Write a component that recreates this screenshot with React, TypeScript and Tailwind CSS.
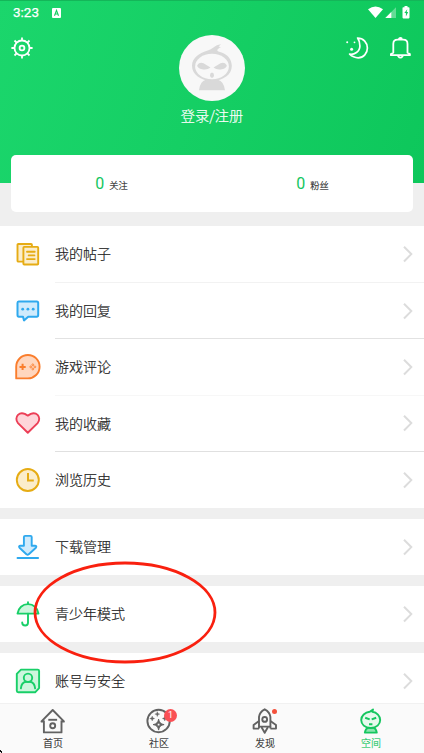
import type { ReactNode } from "react";

const PostsIcon = () => (
  <svg width="28" height="28" viewBox="0 0 28 28" fill="#fbedcb" stroke="#e6ac14" strokeWidth="1.9" strokeLinejoin="round">
    <rect x="3.5" y="4" width="14.4" height="17.6" rx="0.8" />
    <rect x="9.4" y="6.9" width="14.8" height="17.6" rx="0.8" />
    <path d="M13 11.7h7.7M14.7 15.4h5.7M13 19.1h7.7" strokeLinecap="round" />
  </svg>
);

const RepliesIcon = () => (
  <svg width="28" height="28" viewBox="0 0 28 28">
    <path
      d="M4.6 4.5h18.2q1.4 0 1.4 1.6v12q0 1.6-1.6 1.6H14.2L10 23.4 9 19.7H4.9Q3.5 19.7 3.5 18.1V6.1Q3.5 4.5 4.6 4.5Z"
      fill="#d0ebfc" stroke="#2fa9ee" strokeWidth="2" strokeLinejoin="round"
    />
    <g fill="#2fa9ee">
      <circle cx="8.7" cy="12.2" r="1.4" />
      <circle cx="13.9" cy="12.2" r="1.4" />
      <circle cx="19.2" cy="12.2" r="1.4" />
    </g>
  </svg>
);

const GamesIcon = () => (
  <svg width="28" height="28" viewBox="0 0 28 28" fill="none" stroke="#fa7d2c">
    <path d="M2.2 25.4V13.8A11.7 11.7 0 1 1 13.8 25.4Z" fill="#ffd6be" strokeWidth="1.9" strokeLinejoin="round" />
    <path d="M8.6 10.8v6.2M5.5 13.9h6.2" strokeWidth="2" />
    <g strokeWidth="0.9">
      <circle cx="18.8" cy="11.8" r="0.9" />
      <circle cx="18.8" cy="16" r="0.9" />
      <circle cx="16.7" cy="13.9" r="0.9" />
      <circle cx="20.9" cy="13.9" r="0.9" />
    </g>
  </svg>
);

const HeartIcon = () => (
  <svg width="28" height="28" viewBox="0 0 28 28">
    <path
      d="M13.8 23.8 4 14.1C1.8 11.6 1.9 8 4 5.9 5.6 4.4 8.8 4.1 10.8 4.9L13.8 6.6 16.8 4.9C18.8 4.1 22 4.4 23.6 5.9 25.7 8 25.8 11.6 23.6 14.1Z"
      fill="#fed5da" stroke="#ec3f57" strokeWidth="1.9" strokeLinejoin="round"
    />
  </svg>
);

const ClockIcon = () => (
  <svg width="28" height="28" viewBox="0 0 28 28" fill="none" stroke="#e6ac14">
    <circle cx="13.8" cy="14" r="11" fill="#fbedcb" strokeWidth="1.9" />
    <path d="M14 7v7.4h5.8" strokeWidth="2" />
  </svg>
);

const DownloadIcon = () => (
  <svg width="28" height="28" viewBox="0 0 28 28" fill="#d0ebfc" stroke="#2fa9ee" strokeWidth="1.9" strokeLinejoin="round" strokeLinecap="round">
    <path d="M11.2 2.9h5.3q1.2 0 1.2 1.2v8.7h3.2q2.3.2 1 1.9L14.8 21.2q-1.2 1.2-2.4 0L5.5 14.7q-1.3-1.7 1-1.9h3.4V4.1q0-1.2 1.3-1.2Z" />
    <path d="M3.5 25h20.6" />
  </svg>
);

const UmbrellaIcon = () => (
  <svg width="28" height="28" viewBox="0 0 28 28" fill="none" stroke="#18cf68" strokeWidth="1.9" strokeLinejoin="round" strokeLinecap="round">
    <path d="M3.5 13.6C4.3 7.8 8.6 4.1 14 4.1S23.7 7.8 24.5 13.6Z" fill="#cdf6dd" />
    <path d="M14 2.2v1.9M14 13.8v9q0 2.7-2.8 2.7-3 0-3-3.1" />
  </svg>
);

const AccountIcon = () => (
  <svg width="28" height="28" viewBox="0 0 28 28" fill="none" stroke="#18cf68" strokeWidth="1.9" strokeLinejoin="round" strokeLinecap="round">
    <path d="M7 2.6h16.7q1.4 0 1.4 1.5v17l-4 4.2H4.3q-1.5 0-1.5-1.5V6.8Z" fill="#cdf6dd" />
    <circle cx="14" cy="10.8" r="4.2" />
    <path d="M6.9 21.4Q7.4 15.3 12 14.8M21.1 21.4Q20.6 15.3 16 14.8" />
  </svg>
);

const GearIcon = () => (
  <svg width="22" height="22" viewBox="0 0 22 22" fill="none" stroke="#fff" strokeWidth="1.8">
    <circle cx="11" cy="11" r="7.5" />
    <circle cx="11" cy="11" r="2.4" />
    <path d="M11 .4v3M11 18.6v3M.4 11h3M18.6 11h3M3.5 3.5l2.1 2.1M16.4 16.4l2.1 2.1M3.5 18.5l2.1-2.1M16.4 5.6l2.1-2.1" />
  </svg>
);

const MoonIcon = () => (
  <svg width="24" height="24" viewBox="0 0 24 24" fill="none" stroke="#fff" strokeWidth="1.7" strokeLinejoin="round">
    <path d="M11.6 2C17.5 2 21.4 6.8 21.4 12S17.5 21.8 12.2 21.8Q7.4 21.8 3.6 18.2C8.2 19 13.9 15.7 13.9 10Q13.9 5.2 11.6 2Z" />
    <g fill="#fff" stroke="none">
      <circle cx="1.2" cy="6.3" r="1" />
      <circle cx="8.5" cy="6.3" r="0.9" />
      <circle cx="5.6" cy="13.3" r="1.5" />
    </g>
  </svg>
);

const BellIcon = () => (
  <svg width="22" height="24" viewBox="0 0 22 24" fill="none" stroke="#fff" strokeWidth="1.8" strokeLinejoin="round" strokeLinecap="round">
    <path d="M3.3 16.8V7.9q0-4.2 4.4-4.2h5.4q4.4 0 4.4 4.2v8.9L19.9 18v1.2H.9V18ZM8.9 3.4q0-1.5 1.5-1.5t1.5 1.5M8.2 20.2q2.2 3 4.4 0" />
  </svg>
);

const Mascot = () => (
  <svg width="66" height="66" viewBox="0 0 66 66">
    <path d="M20 55.3Q20.7 46.5 27.2 44.5H38.7Q45 46.5 46 55.3Z" fill="#d9d9d9" />
    <path
      d="M33 45.8C21.5 45.8 13 39.5 13 30.8 13 23 20.2 18 28 15.7 34 14 35.5 10 42 9.2L39.6 11.4 42 12.2C39.8 12.8 38.3 14.5 38.3 15.2 38.3 16.3 39.8 16.4 43.3 17.7 49.2 20 52.8 24.8 52.8 31 52.8 39.5 44.5 45.8 33 45.8Z"
      fill="#d9d9d9"
    />
    <ellipse cx="33" cy="31.5" rx="16.9" ry="12.8" fill="#f8f8f8" />
    <path d="M18.2 30.2Q20.6 26.7 24.5 28.3L31.5 32.5Q28.5 35.1 23.2 34.3 18.4 33.4 18.2 30.2ZM47.8 30.2Q45.4 26.7 41.5 28.3L34.5 32.5Q37.5 35.1 42.8 34.3 47.6 33.4 47.8 30.2Z" fill="#d9d9d9" />
    <ellipse cx="33" cy="40.2" rx="2" ry="2.7" fill="#d9d9d9" />
  </svg>
);

const Chevron = () => (
  <svg width="10" height="18" viewBox="0 0 10 18" fill="none" stroke="#dcdcdc" strokeWidth="2">
    <path d="M1 1.7 8.3 9.1 1 16.5" />
  </svg>
);

const HomeIcon = () => (
  <svg width="28" height="28" viewBox="0 0 28 28" fill="none" stroke="#626262" strokeWidth="1.9" strokeLinejoin="round">
    <path d="M4.9 13.4v12h17.6v-12M2 14.9 13.7 3 25.4 14.9M1.8 14.5h3M22.6 14.5h3" />
    <path d="M9.3 12.8h8.8" />
    <circle cx="13.7" cy="18.8" r="2.5" />
  </svg>
);

const CommunityIcon = () => (
  <svg width="28" height="28" viewBox="0 0 28 28" fill="#626262">
    <circle cx="13.6" cy="14" r="11.2" fill="none" stroke="#626262" strokeWidth="1.9" />
    <path d="M13.6 12.1Q14.2 17 19.1 17.6 14.2 18.2 13.6 23.1 13 18.2 8.1 17.6 13 17 13.6 12.1Z" stroke="#626262" strokeWidth="1" />
    <path d="M12.7 16.7h1.8v1.8h-1.8z" fill="#fafafa" />
    <path d="M12.3 4.6l.7 1.8 1.8.7-1.8.7-.7 1.8-.7-1.8-1.8-.7 1.8-.7zM7.2 9l.7 1.8 1.8.7-1.8.7-.7 1.8-.7-1.8-1.8-.7 1.8-.7zM19.8 9l.7 1.8 1.8.7-1.8.7-.7 1.8-.7-1.8-1.8-.7 1.8-.7z" stroke="#626262" strokeWidth=".3" />
  </svg>
);

const DiscoverIcon = () => (
  <svg width="28" height="28" viewBox="0 0 28 28" fill="none" stroke="#626262" strokeWidth="1.9" strokeLinejoin="round">
    <path d="M8 19.6V9.8Q8.6 5 13.7 2.3 18.8 5 19.4 9.8V19.6Z" />
    <path d="M8 14 2.6 18V21.6H8M19.4 14 25 18v3.6h-5.6M8 19.6v2M19.4 19.6v2M10.4 20l3.3 5.8 3.3-5.8" />
    <circle cx="13.7" cy="12.4" r="2.4" />
  </svg>
);

const SpaceIcon = () => (
  <svg width="28" height="28" viewBox="0 0 28 28" fill="none" stroke="#15c65f" strokeWidth="1.9" strokeLinejoin="round">
    <path d="M7.8 25.6Q8.6 21.4 11 20.8h5.8Q19.1 21.4 19.8 25.6Z" fill="#8be5ae" />
    <path d="M13.7 21C7.9 21 4.2 17.3 4.2 13.1 4.2 8.7 8 5.4 12.8 4.8L16 2.4 15.3 4.8C19.8 5.5 23.2 8.8 23.2 13.1 23.2 17.3 19.5 21 13.7 21Z" fill="#e6faed" />
    <path d="M8.2 10.8l4.5 1.6M19.2 10.8l-4.5 1.6M12 17.2h3.4" strokeWidth="2" />
  </svg>
);

type Item = { label: string; icon: ReactNode };

const groups: Item[][] = [
  [
    { label: "我的帖子", icon: <PostsIcon /> },
    { label: "我的回复", icon: <RepliesIcon /> },
    { label: "游戏评论", icon: <GamesIcon /> },
    { label: "我的收藏", icon: <HeartIcon /> },
    { label: "浏览历史", icon: <ClockIcon /> },
  ],
  [{ label: "下载管理", icon: <DownloadIcon /> }],
  [{ label: "青少年模式", icon: <UmbrellaIcon /> }],
  [{ label: "账号与安全", icon: <AccountIcon /> }],
];

const dividers = ["", "bg-[#f2f2f2]", "bg-[#e2e2e2]", "bg-[#f7f7f7]", "bg-[#e0e0e0]"];

const tabs = [
  { label: "首页", icon: <HomeIcon /> },
  { label: "社区", icon: <CommunityIcon />, count: 1 },
  { label: "发现", icon: <DiscoverIcon />, dot: true },
  { label: "空间", icon: <SpaceIcon />, active: true },
];

const StatusBar = () => (
  <div className="flex h-6 items-center border-t border-[#14b659] px-[13px] text-white">
    <span className="w-[27px] font-[Roboto] text-[13.5px] leading-none [-webkit-text-stroke:0.25px]">3:23</span>
    <svg className="ml-3" width="9" height="10" viewBox="0 0 9 10">
      <rect width="9" height="10" rx="1" fill="#fff" />
      <path d="M2.5 7.8 4.5 2.3 6.5 7.8M3.2 6h2.6" stroke="#16cd63" strokeWidth="1.1" fill="none" />
    </svg>
    <svg className="ml-auto" width="43" height="13" viewBox="0 0 43 13" fill="#fff">
      <path d="M0 3.2Q7.5-2.3 15 3.2L7.5 12Z" />
      <path d="M28 1.3V12H17.3Z" fillOpacity=".35" />
      <path d="M23.3 6V12H17.3Z" />
      <path d="M36.5 0h3v1.2h1.2q.8 0 .8.8v9.6q0 .8-.8.8h-5.4q-.8 0-.8-.8V2q0-.8.8-.8h1.2Z" />
      <path d="M39.3 3.2 36.3 7h1.6v3.4L40.2 6h-1.5Z" fill="#12cb60" />
    </svg>
  </div>
);

const Stat = ({ value, label }: { value: number; label: string }) => (
  <div className="flex items-baseline">
    <span className="font-[Roboto] text-[16px] leading-none text-[#13c660]">{value}</span>
    <span className="ml-[5px] text-[9.3px] leading-none font-light text-[#222] [-webkit-text-stroke:0.2px]">{label}</span>
  </div>
);

const Row = ({ label, icon }: Item) => (
  <button className="flex h-[56.4px] w-full items-center pl-3.5">
    {icon}
    <span className="ml-[13px] flex-1 pb-[0.5px] text-left text-[14px] font-light text-[#222] [-webkit-text-stroke:0.2px]">
      {label}
    </span>
    <span className="mr-[11px]">
      <Chevron />
    </span>
  </button>
);

export default function App() {
  return (
    <div className="relative flex h-[753px] w-[424px] flex-col overflow-hidden bg-[#efefef] font-['Noto_Sans_CJK_SC',sans-serif]">
      {/* Header */}
      <header className="h-[182.5px] shrink-0 bg-linear-110 from-[#1bd66c] to-[#0dc75b]">
        <StatusBar />
        <div className="flex items-start justify-between pr-3 pl-[11px]">
          <button className="mt-[13px] w-[67px]">
            <GearIcon />
          </button>
          <div className="mt-[11px] flex flex-col items-center">
            <div className="rounded-full bg-[#f8f8f8]">
              <Mascot />
            </div>
            <span className="mt-[3px] text-[14.2px] leading-[22px] font-light text-white [-webkit-text-stroke:0.2px]">登录/注册</span>
          </div>
          <div className="mt-3 flex w-[66px] justify-between">
            <MoonIcon />
            <BellIcon />
          </div>
        </div>
      </header>

      {/* Follow counts */}
      <section className="relative mx-[11px] -mt-[27.5px] mb-3.5 grid h-[57px] shrink-0 grid-cols-2 place-items-center rounded-[5px] bg-white">
        <Stat value={0} label="关注" />
        <Stat value={0} label="粉丝" />
      </section>

      {/* Menu */}
      <main className="flex min-h-0 flex-1 flex-col gap-[10.6px] overflow-hidden">
        {groups.map((group) => (
          <div key={group[0].label} className="shrink-0 bg-white">
            {group.map((item, i) => (
              <div key={item.label} className="relative">
                {i > 0 && <div className={`absolute -top-[0.6px] right-0 left-[55px] h-px ${dividers[i]}`} />}
                <Row {...item} />
              </div>
            ))}
          </div>
        ))}
      </main>

      {/* Bottom tabs */}
      <nav className="grid h-[50px] shrink-0 grid-cols-4 border-t border-[#f1f1f1] bg-[#fafafa]">
        {tabs.map((tab) => (
          <button key={tab.label} className="flex flex-col items-center pt-[3px]">
            <span className="relative">
              {tab.icon}
              {tab.count && (
                <span className="absolute top-[2px] -right-[4px] flex size-[13px] items-center justify-center rounded-full bg-[#fa5055] font-[Roboto] text-[9px] leading-none text-white">
                  {tab.count}
                </span>
              )}
              {tab.dot && <span className="absolute top-[2px] right-[2px] size-[5px] rounded-full bg-[#f4513b]" />}
            </span>
            <span
              className={`text-[10px] leading-4 font-light [-webkit-text-stroke:0.2px] ${tab.active ? "text-[#15c65f]" : "text-[#222]"}`}
            >
              {tab.label}
            </span>
          </button>
        ))}
      </nav>

      {/* Hand-drawn highlight */}
      <svg className="pointer-events-none absolute top-[558px] left-[30px]" width="190" height="110" viewBox="0 0 190 110">
        <ellipse cx="95" cy="54.5" rx="90" ry="49.5" fill="none" stroke="#f9200f" strokeWidth="2.8" />
      </svg>
      <svg className="absolute bottom-0 left-0" width="3" height="4" viewBox="0 0 3 4">
        <path d="M0 1h1v1h1v2H1V3H0Z" fill="#111" />
      </svg>
    </div>
  );
}
